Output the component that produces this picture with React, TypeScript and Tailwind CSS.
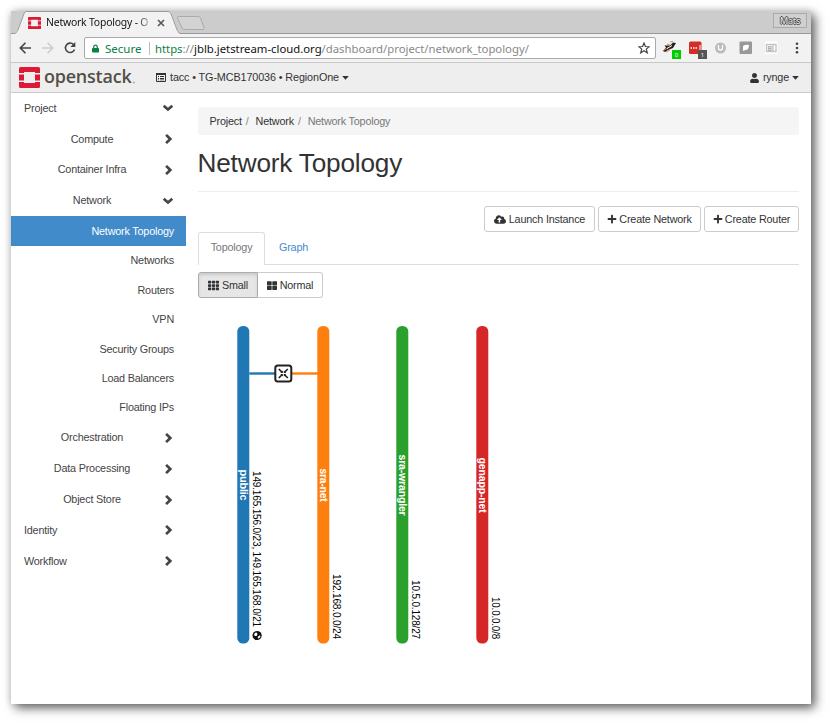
import React from 'react';
import { FaCloudUploadAlt, FaPlus, FaTh, FaThLarge, FaUser, FaLock } from 'react-icons/fa';

function Logo({ className }: { className: string }) {
  return (
    <svg className={className} viewBox="0 0 21 21" preserveAspectRatio="none">
      <g fill="#dc1a38">
        <path d="M1.500 0h18A1.500 1.500 0 0 1 21 1.500V6h-5V5H5v1H0V1.500A1.500 1.500 0 0 1 1.500 0z" />
        <path d="M0 15h5v1h11v-1h5v4.500a1.500 1.500 0 0 1-1.500 1.500h-18A1.500 1.500 0 0 1 0 19.500z" />
        <path d="M0 7.500h5v6H0zM16 7.500h5v6h-5z" />
      </g>
    </svg>
  );
}

function Chevron({ open }: { open?: boolean }) {
  return (
    <svg className="h-3 w-3" viewBox="0 0 12 12" fill="none" stroke="#444" strokeWidth="2.700">
      {open ? <path d="M1.700 3.800L6 7.500L10.300 3.800" /> : <path d="M4.100 1.900L8.300 6L4.100 10.100" />}
    </svg>
  );
}

function Caret() {
  return <svg className="h-[4px] w-[7px]" viewBox="0 0 7 4"><path d="M.2 0h6.600L3.500 3.800z" fill="#333" /></svg>;
}

function Group({ label, open, nested }: { label: string; open?: boolean; nested?: boolean }) {
  return (
    <div className="flex h-[30.800px] shrink-0 items-center pl-[13px] pr-[12.500px]">
      <span className={nested ? 'flex-1 pr-[1.500px] text-center' : 'flex-1'}>{label}</span>
      <Chevron open={open} />
    </div>
  );
}

function Item({ label }: { label: string }) {
  return <div className="flex h-[29.400px] shrink-0 items-center justify-end pr-[12px]">{label}</div>;
}

function Button({ children, className }: { children: React.ReactNode; className: string }) {
  return (
    <button className={`flex h-[26px] items-center justify-center whitespace-nowrap rounded-[3px] border border-[#ccc] text-[#333] ${className}`}>
      {children}
    </button>
  );
}

const networks = [
  { x: 40, name: 'public', color: '#1f77b4', len: 31, cidr: '149.165.156.0/23, 149.165.168.0/21', end: 302, cidrLen: 156 },
  { x: 120, name: 'sra-net', color: '#ff7f0e', len: 33, cidr: '192.168.0.0/24', end: 314, cidrLen: 65 },
  { x: 199, name: 'sra-wrangler', color: '#2ca02c', len: 61, cidr: '10.5.0.128/27', end: 314, cidrLen: 59 },
  { x: 279, name: 'genapp-net', color: '#d62728', len: 55, cidr: '10.0.0.0/8', end: 314, cidrLen: 42 },
];

function Topology() {
  return (
    <svg className="mt-[27px] block h-[320px] w-[400px]" viewBox="0 0 400 320" fontFamily="'Liberation Sans', Arial, sans-serif">
      <g transform="translate(-0.700 0)">
        <rect x="52" y="47.300" width="28" height="2.400" fill="#1f77b4" />
        <rect x="93" y="47.300" width="28" height="2.400" fill="#ff7f0e" />
        {networks.map((n) => (
          <g key={n.name}>
            <rect x={n.x} y="1" width="12" height="317.500" rx="5.500" fill={n.color} />
            <text transform={`translate(${n.x + 2.400} 160) rotate(90)`} fontSize="10.800" fontWeight="700" fill="#fff" textAnchor="middle" textLength={n.len} lengthAdjust="spacingAndGlyphs">{n.name}</text>
            <text transform={`translate(${n.x + 15.500} ${n.end}) rotate(90)`} fontSize="11" fill="#000" textAnchor="end" textLength={n.cidrLen} lengthAdjust="spacingAndGlyphs">{n.cidr}</text>
          </g>
        ))}
        <g transform="translate(59.800 310.500)">
          <circle r="4.600" fill="#111" />
          <path d="M-3-1.500L-1-3.300L.5-1.500L-.5.500L-2.500.500zM.5 1.500L3-.5L3.300 1.500L1.200 3.300z" fill="#fff" />
        </g>
        <rect x="78" y="40.500" width="16" height="16" rx="2.500" fill="#fff" stroke="#222" strokeWidth="2" />
        <path d="M81.500 44L85 47.500M90.500 44L87 47.500M81.500 53L85 49.500M90.500 53L87 49.500" stroke="#222" strokeWidth="1.700" fill="none" />
        <path d="M85.500 45.500v2.500h-2.500zM86.500 45.500v2.500h2.500zM85.500 51.500v-2.500h-2.500zM86.500 51.500v-2.500h2.500z" fill="#222" />
      </g>
    </svg>
  );
}

function TabStrip() {
  return (
    <div className="relative flex h-[23px] shrink-0 bg-[#ccc]">
      <svg className="absolute left-0 top-0 h-[23px] w-[800px]" viewBox="0 0 800 23" fill="none">
        <path d="M0 22.500H4C6 22 6 21 7 19L13 3C14 1 14 .5 16 .5H156C158 .5 159 1 160 3L166 19C167 21 168 22.500 170 22.500H800" stroke="#999" />
        <path d="M4 23C6 22 6 21 7.500 19L13.500 3C14 1.500 15 1 16 1H156C158 1 158.500 1.500 159.500 3L165.500 19C167 21 167.500 23 169 23z" fill="#f2f2f2" />
        <path d="M168 5.500H187C188 5.500 189 6 189.500 7L193 16.500C193.500 18 193 18.500 192 18.500H173.500C172 18.500 171.500 18 171 17L166.500 7C166 6 166.500 5.500 168 5.500z" fill="#d3d3d3" stroke="#aaa" />
      </svg>
      <div className="relative flex h-[23px] w-full items-center pl-[17px]">
        <Logo className="h-3 w-[13px]" />
        <span className="ml-[5px] w-[106px] whitespace-nowrap bg-gradient-to-r from-[#111] from-85% to-[#ddd] bg-clip-text font-['Noto_Sans',sans-serif] text-[10.400px] text-transparent">Network Topology - O</span>
        <svg className="ml-[5px] h-2 w-2" viewBox="0 0 8 8" stroke="#555" strokeWidth="1.600"><path d="M1 1L7 7M7 1L1 7" /></svg>
        <div className="mb-[5px] ml-auto mr-1 flex h-[15px] w-[34px] items-center justify-center border border-[#aaa] bg-[#d0d0d0] font-['Noto_Sans',sans-serif] text-[9px] text-[#eee] [text-shadow:1px_0_#444,-1px_0_#444,0_1px_#444,0_-1px_#444]">Mats</div>
      </div>
    </div>
  );
}

function Toolbar() {
  return (
    <div className="flex h-[29px] shrink-0 items-center border-b border-[#c8c8c8] bg-[#f2f2f2] font-['Noto_Sans',sans-serif] tracking-normal">
      <svg className="ml-[7px] h-[14px] w-[60px]" viewBox="0 0 60 14" fill="none" strokeWidth="1.600">
        <path d="M13 7H2.500M7.500 1.800L2.300 7L7.500 12.200" stroke="#444" />
        <path d="M24 7H34.500M29.500 1.800L34.700 7L29.500 12.200" stroke="#ccc" />
        <path d="M55.500 3.500A4.700 4.700 0 1 0 56.500 8.500" stroke="#444" />
        <path d="M57.300 1V6H52.300z" fill="#444" />
      </svg>
      <div className="ml-[6px] flex h-[22px] w-[572px] shrink-0 items-center rounded-[2px] border border-[#aaa] bg-white pl-[7px] text-[11.500px]">
        <FaLock className="h-[9px] w-[7px] text-[#0b8043]" />
        <span className="ml-[6px] w-[37px] whitespace-nowrap text-[#0b8043]">Secure</span>
        <span className="ml-[7px] h-[13px] w-px bg-[#bbb]" />
        <span className="ml-[5px] whitespace-nowrap text-[11.320px] text-[#888]"><span className="text-[#0b8043]">https</span>://<span className="text-[#111]">jblb.jetstream-cloud.org</span>/dashboard/project/network_topology/</span>
        <svg className="ml-auto mr-[5px] h-3 w-3" viewBox="0 0 12 12" fill="none" stroke="#444" strokeWidth="1.200"><path d="M6 1L7.400 4.500L11.200 4.700L8.300 7.100L9.300 10.900L6 8.800L2.700 10.900L3.700 7.100L.8 4.700L4.600 4.500z" /></svg>
      </div>
      <svg className="ml-[6px] h-6 w-[138px]" viewBox="0 0 138 24">
        <path d="M1 15L4 11.500L2.500 9.500L8 9.500L11 6.500L14 7L11 12L6 14L3 16z" fill="#222" />
        <path d="M2 14L6 12M5 8L8 9M8 6L11 5.500M4 16L8 14" stroke="#e08a52" />
        <path d="M5 12.500L10 9.500" stroke="#fff" />
        <rect x="10" y="14" width="9" height="9" fill="#0c0" />
        <rect x="27" y="5.500" width="12.500" height="12.500" rx="1.500" fill="#d32d27" />
        <path d="M28.500 12h7" stroke="#fff" strokeWidth="1.600" strokeDasharray="1.500 1" /><path d="M38 9v5" stroke="#fff" />
        <rect x="36" y="14" width="9" height="9" fill="#555" />
        <text x="14.500" y="21.200" fontSize="6" fill="#fff" textAnchor="middle">0</text>
        <text x="40.500" y="21.200" fontSize="6" fill="#fff" textAnchor="middle">1</text>
        <circle cx="58.500" cy="12" r="5.500" fill="#bbb" />
        <path d="M56.500 9v3a2 2 0 0 0 4 0V9" stroke="#fff" strokeWidth="1.300" fill="none" />
        <rect x="77.500" y="5.500" width="12.500" height="12.500" rx="1" fill="#999" />
        <path d="M81 15V10Q84 8 87 9Q87 14 83.500 14z" fill="#fff" />
        <rect x="103" y="5.500" width="12.500" height="12.500" fill="#fff" />
        <path d="M104.500 8.500h6.500v7h-6.500zM111.500 8.500h2.500v7H111.500" stroke="#c4c4c4" strokeWidth="1.400" fill="none" />
        <text x="107.800" y="14.500" fontSize="7" fill="#aaa" textAnchor="middle" fontWeight="bold">B</text>
        <g fill="#444"><circle cx="135" cy="7.700" r="1.300" /><circle cx="135" cy="12" r="1.300" /><circle cx="135" cy="16.300" r="1.300" /></g>
      </svg>
    </div>
  );
}

function Header() {
  return (
    <div className="flex h-[30px] shrink-0 items-center border-b border-[#ccc] bg-[#eee] text-[#333]">
      <Logo className="ml-2 h-[21px] w-[21px]" />
      <svg className="ml-1 h-[28px] w-[92px] overflow-visible" viewBox="0 0 92 28" fontFamily="'Open Sans', sans-serif">
        <text x="0" y="19.300" fontSize="18.800" fontWeight="600" fill="#544e48" textLength="87.500" lengthAdjust="spacingAndGlyphs">openstack</text>
        <circle cx="90" cy="18.500" r="1" fill="#aaa" />
      </svg>
      <svg className="ml-5 h-[9px] w-[10px]" viewBox="0 0 10 9"><path d="M.5.500h9v8h-9z" fill="none" stroke="#333" /><path d="M0 0h10v2H0zM2 3h1v1H2zM4 3h4v1H4zM2 5h1v1H2zM4 5h4v1H4zM2 6.500h1v.8H2zM4 6.500h4v.8H4z" fill="#333" /></svg>
      <span className="ml-1 whitespace-nowrap tracking-[-0.110px]">tacc • TG-MCB170036 • RegionOne</span>
      <span className="ml-[3px]"><Caret /></span>
      <FaUser className="ml-auto h-[10px] w-[9px]" />
      <span className="ml-1">rynge</span>
      <span className="ml-[3px] mr-3"><Caret /></span>
    </div>
  );
}

export default function App() {
  return (
    <div className="h-[723px] w-[830px] overflow-hidden bg-white pl-[11px] pt-[11px] font-['Liberation_Sans',Arial,sans-serif] text-[10.800px] leading-[15px] tracking-[-0.190px] text-[#444]">
      <div className="flex h-[693px] w-[800px] flex-col bg-white shadow-[4px_4px_10px_rgba(0,0,0,0.600),0_0_8px_rgba(0,0,0,0.150)]">
        <TabStrip />
        <Toolbar />
        <Header />
        <div className="flex min-h-0 flex-1">
          <nav className="flex w-[175px] shrink-0 flex-col">
            <Group label="Project" open />
            <Group label="Compute" nested />
            <Group label="Container Infra" nested />
            <Group label="Network" nested open />
            <div className="flex h-[30px] shrink-0 items-center justify-end bg-[#428bca] pr-[12px] text-white">Network Topology</div>
            <Item label="Networks" />
            <Item label="Routers" />
            <Item label="VPN" />
            <Item label="Security Groups" />
            <Item label="Load Balancers" />
            <Item label="Floating IPs" />
            <Group label="Orchestration" nested />
            <Group label="Data Processing" nested />
            <Group label="Object Store" nested />
            <Group label="Identity" />
            <Group label="Workflow" />
          </nav>
          <main className="ml-3 mt-[14px] w-[601px]">
            <div className="flex h-7 items-center rounded-[3px] bg-[#f5f5f5] pl-[11.500px] text-[#333]">
              <span>Project</span><span className="ml-1 text-[#888]">/</span>
              <span className="ml-[7px]">Network</span><span className="ml-1 text-[#888]">/</span>
              <span className="ml-[7px] text-[#777]">Network Topology</span>
            </div>
            <h1 className="-ml-[0.500px] flex h-[57px] items-center border-b border-[#eee] text-[26.200px] text-[#333]">Network Topology</h1>
            <div className="mt-[14px] flex justify-end gap-[3px]">
              <Button className="w-[111px] gap-[3px]"><FaCloudUploadAlt className="h-[11px] w-[12px]" />Launch Instance</Button>
              <Button className="w-[103px] gap-[2px]"><FaPlus className="h-[10px] w-[10px]" />Create Network</Button>
              <Button className="w-[95px] gap-[2px]"><FaPlus className="h-[10px] w-[10px]" />Create Router</Button>
            </div>
            <div className="flex h-[33px] border-b border-[#ddd]">
              <div className="flex h-[33px] w-[67px] items-center justify-center rounded-t-[3px] border border-b-0 border-[#ddd] bg-white pb-[3px] text-[#777]">Topology</div>
              <div className="flex w-[57px] items-center justify-center pb-[1px] text-[#428bca]">Graph</div>
            </div>
            <div className="mt-[7px] flex">
              <Button className="w-[60px] gap-[3px] rounded-r-none !border-[#adadad] bg-[#e6e6e6] shadow-[inset_0_2px_3px_rgba(0,0,0,0.125)]"><FaTh className="h-[11px] w-[11px]" />Small</Button>
              <Button className="w-[65px] gap-[3px] rounded-l-none border-l-0"><FaThLarge className="h-[11px] w-[10px]" />Normal</Button>
            </div>
            <Topology />
          </main>
        </div>
      </div>
    </div>
  );
}
